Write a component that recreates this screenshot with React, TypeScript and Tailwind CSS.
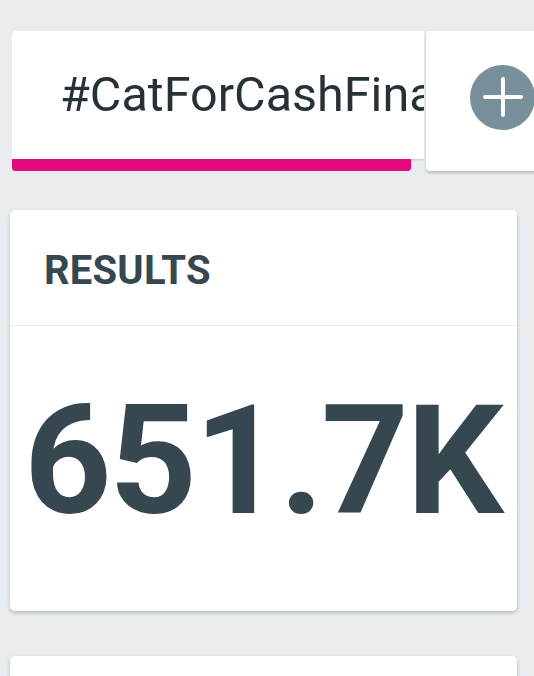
export default function App() {
  // Hashtag tabs + results card, Roboto everywhere
  return (
    <div
      className="min-h-screen overflow-hidden bg-[#e9edf0] text-[#37474f]"
      style={{ fontFamily: "Roboto, 'Liberation Sans', sans-serif" }}
    >
      {/* TABS */}
      <div className="flex gap-[2px] pt-[31px] pl-[12px] w-[700px]">
        <div className="w-[412px] h-[140px] flex flex-col overflow-hidden">
          <div className="flex-1 flex items-center pl-[48px] bg-white rounded-tl-[4px] shadow-[0_1px_2px_rgba(0,0,0,0.15)]">
            <span className="whitespace-nowrap text-[48.5px] leading-none text-[#263238]">
              #CatForCashFinal
            </span>
          </div>
          <div className="h-[12px] mr-[13px] bg-[#e2097b] rounded-b-[4px] shadow-[0_2px_3px_rgba(0,0,0,0.2)]" />
        </div>

        <div className="w-[200px] h-[140px] bg-white rounded-[4px] shadow-[0_2px_3px_rgba(0,0,0,0.2)] flex items-center pl-[44px] pb-[8px]">
          <div className="w-[65px] h-[65px] rounded-full bg-[#78909c] flex items-center justify-center">
            <svg width="40" height="40" viewBox="0 0 40 40">
              <path d="M20 2v36M2 20h36" stroke="white" strokeWidth="4" strokeLinecap="round" />
            </svg>
          </div>
        </div>
      </div>

      {/* RESULTS CARD */}
      <div className="mt-[39px] ml-[10px] w-[507px] bg-white rounded-[5px] shadow-[0_2px_4px_rgba(0,0,0,0.2)]">
        <div className="h-[116px] flex items-center pl-[34px] pt-[6px] border-b border-[#e6e9eb]">
          <h2 className="text-[40px] leading-[40px] font-bold tracking-[0.2px]">RESULTS</h2>
        </div>
        <div className="h-[285px] flex items-center pl-[14px] pb-[16px]">
          <p className="text-[153px] leading-none font-bold tracking-[-2.6px] whitespace-nowrap">651.7K</p>
        </div>
      </div>

      {/* NEXT CARD (cut off) */}
      <div className="mt-[45px] ml-[10px] w-[507px] h-[200px] bg-white rounded-[5px] shadow-[0_2px_4px_rgba(0,0,0,0.2)]" />
    </div>
  );
}
